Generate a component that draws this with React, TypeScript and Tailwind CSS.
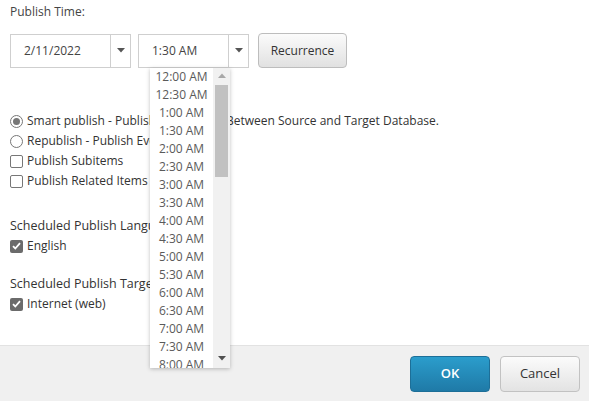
import React from "react";

const TIMES = [
  "12:00 AM", "12:30 AM", "1:00 AM", "1:30 AM", "2:00 AM", "2:30 AM",
  "3:00 AM", "3:30 AM", "4:00 AM", "4:30 AM", "5:00 AM", "5:30 AM",
  "6:00 AM", "6:30 AM", "7:00 AM", "7:30 AM", "8:00 AM",
];

function Caret({ up = false }: { up?: boolean }) {
  return (
    <svg width="8" height="5" viewBox="0 0 8 5" className={up ? "rotate-180" : ""}>
      <path d="M0 0h8L4 4.5z" fill="currentColor" />
    </svg>
  );
}

function ComboBox({ value, width }: { value: string; width: string }) {
  return (
    <div className="flex h-[34px]">
      <div className={`${width} flex items-center border border-[#cfcfcf] bg-white pl-[13px] text-[#444]`}>
        {value}
      </div>
      <div className="flex w-[20px] items-center justify-center border border-l-0 border-[#cfcfcf] bg-white text-[#555]">
        <Caret />
      </div>
    </div>
  );
}

function Radio({ checked }: { checked?: boolean }) {
  return (
    <span className="flex h-[13px] w-[13px] shrink-0 items-center justify-center rounded-full border border-[#777] bg-white">
      {checked && <span className="h-[7px] w-[7px] rounded-full bg-[#777]" />}
    </span>
  );
}

function Check({ checked }: { checked?: boolean }) {
  if (checked) {
    return (
      <span className="flex h-[13px] w-[13px] shrink-0 items-center justify-center rounded-[2px] bg-[#6b6b6b]">
        <svg width="9" height="8" viewBox="0 0 9 8">
          <path d="M1 4.2l2.3 2.3L8 1.2" stroke="#fff" strokeWidth="1.8" fill="none" />
        </svg>
      </span>
    );
  }
  return <span className="h-[13px] w-[13px] shrink-0 rounded-[2px] border border-[#777] bg-white" />;
}

function Option({ control, label }: { control: React.ReactNode; label: string }) {
  return (
    <div className="flex h-5 items-center gap-[4px] whitespace-nowrap">
      {control}
      <span>{label}</span>
    </div>
  );
}

export default function App() {
  return (
    <div
      className="relative flex h-[401px] w-[589px] flex-col overflow-hidden bg-white text-[12px] text-[#333]"
      style={{ fontFamily: '"Open Sans", "DejaVu Sans", sans-serif' }}
    >
      <div className="flex-1 px-[10px] pt-[4px]">
        <div className="h-4 leading-4 text-[#444]">Publish Time:</div>

        <div className="mt-[13px] flex items-center">
          <ComboBox value="2/11/2022" width="w-[101px]" />
          <div className="ml-[7px]">
            <ComboBox value="1:30 AM" width="w-[91px]" />
          </div>
          <button className="ml-[9px] h-[35px] w-[89px] rounded-[4px] border border-[#bdbdbd] bg-gradient-to-b from-[#fbfbfb] to-[#e1e1e1] text-[12px] text-[#333]">
            Recurrence
          </button>
        </div>

        <div className="mt-[43px]">
          <Option control={<Radio checked />} label="Smart publish - Publish Differences Between Source and Target Database." />
          <Option control={<Radio />} label="Republish - Publish Everything" />
          <Option control={<Check />} label="Publish Subitems" />
          <Option control={<Check />} label="Publish Related Items" />
        </div>

        <div className="mt-[25px] flex h-5 items-center text-[12.5px]">Scheduled Publish Languages:</div>
        <Option control={<Check checked />} label="English" />

        <div className="mt-[18px] flex h-5 items-center text-[12.5px]">Scheduled Publish Targets:</div>
        <Option control={<Check checked />} label="Internet (web)" />
      </div>

      <div className="flex h-[56px] items-center justify-end gap-[10px] border-t border-[#e2e2e2] bg-[#f0f0f0] pr-[9px]">
        <button className="h-[36px] w-[80px] rounded-[4px] border border-[#1d6f98] bg-gradient-to-b from-[#2b9dcc] to-[#1f7aa7] text-[13px] font-semibold text-white">
          OK
        </button>
        <button className="h-[36px] w-[80px] rounded-[4px] border border-[#c2c2c2] bg-gradient-to-b from-[#fbfbfb] to-[#e3e3e3] text-[13px] text-[#333]">
          Cancel
        </button>
      </div>

      {/* open time list */}
      <div className="absolute left-[150px] top-[68px] flex h-[300px] w-[80px] overflow-hidden bg-white shadow-[0_1px_4px_rgba(0,0,0,0.25)]">
        <div className="flex-1">
          {TIMES.map((t) => (
            <div key={t} className="h-[18px] text-center leading-[18px] text-[#5a5a5a]">
              {t}
            </div>
          ))}
        </div>
        <div className="relative w-[17px] bg-[#f1f1f1]">
          <div className="absolute left-1/2 top-[5px] -translate-x-1/2 text-[#a8a8a8]">
            <Caret up />
          </div>
          <div className="absolute left-[2px] right-[2px] top-[17px] h-[92px] bg-[#c1c1c1]" />
          <div className="absolute bottom-[7px] left-1/2 -translate-x-1/2 text-[#505050]">
            <Caret />
          </div>
        </div>
      </div>
    </div>
  );
}
